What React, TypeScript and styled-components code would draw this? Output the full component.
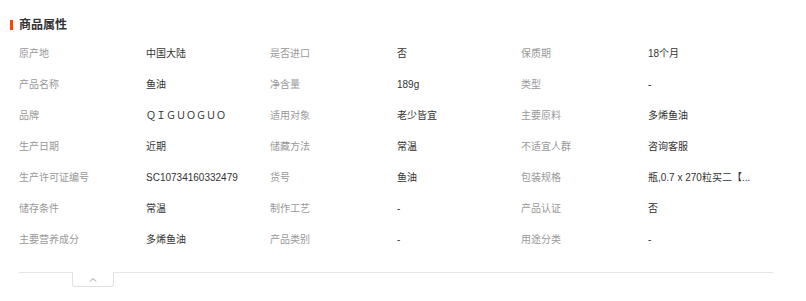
import React from 'react';
import styled, { createGlobalStyle } from 'styled-components';

const GlobalStyle = createGlobalStyle`
  html, body {
    margin: 0;
    padding: 0;
    background: #fff;
  }
  body {
    font-family: "Liberation Sans", "Noto Sans CJK SC", sans-serif;
  }
`;

const Section = styled.div`
  width: 806px;
  padding: 14px 33px 0 19px;
  box-sizing: border-box;
`;

const Title = styled.h3`
  position: relative;
  margin: 0;
  height: 22px;
  line-height: 22px;
  font-size: 12px;
  font-weight: 700;
  color: #333;

  &::before {
    content: '';
    position: absolute;
    left: -9px;
    top: 6px;
    width: 3px;
    height: 10px;
    background: #ff4400;
  }
`;

const Grid = styled.div`
  display: grid;
  grid-template-columns: 127px 124px 127px 124px 127px 1fr;
  grid-auto-rows: 31px;
  margin-top: 2px;
  font-size: 10px;
  line-height: 31px;
`;

const Label = styled.div`
  color: #999;
  white-space: nowrap;
`;

const Value = styled.div`
  color: #333;
  white-space: nowrap;
`;

const Footer = styled.div`
  position: relative;
  margin-top: 17px;
  border-top: 1px solid #e5e5e5;
  height: 30px;
`;

const Toggle = styled.button`
  position: absolute;
  top: -1px;
  left: 53px;
  width: 42px;
  height: 15px;
  padding: 0;
  background: #fff;
  border: 1px solid #e0e0e0;
  border-top-color: #fff;
  border-radius: 0 0 3px 3px;
  display: flex;
  align-items: center;
  justify-content: center;
  cursor: pointer;
`;

const rows: [string, string][] = [
  ['原产地', '中国大陆'],
  ['是否进口', '否'],
  ['保质期', '18个月'],
  ['产品名称', '鱼油'],
  ['净含量', '189g'],
  ['类型', '-'],
  ['品牌', 'ＱＩＧＵＯＧＵＯ'],
  ['适用对象', '老少皆宜'],
  ['主要原料', '多烯鱼油'],
  ['生产日期', '近期'],
  ['储藏方法', '常温'],
  ['不适宜人群', '咨询客服'],
  ['生产许可证编号', 'SC10734160332479'],
  ['货号', '鱼油'],
  ['包装规格', '瓶,0.7 x 270粒买二【...'],
  ['储存条件', '常温'],
  ['制作工艺', '-'],
  ['产品认证', '否'],
  ['主要营养成分', '多烯鱼油'],
  ['产品类别', '-'],
  ['用途分类', '-'],
];

export default function App() {
  return (
    <>
      <GlobalStyle />
      <Section>
        <Title>商品属性</Title>
        <Grid>
          {rows.map(([k, v]) => (
            <React.Fragment key={k}>
              <Label>{k}</Label>
              <Value>{v}</Value>
            </React.Fragment>
          ))}
        </Grid>
        <Footer>
          <Toggle aria-label="收起">
            <svg width="8" height="5" viewBox="0 0 8 5">
              <path d="M1 4.5 L4 1.5 L7 4.5" fill="none" stroke="#999" strokeWidth="1" />
            </svg>
          </Toggle>
        </Footer>
      </Section>
    </>
  );
}
